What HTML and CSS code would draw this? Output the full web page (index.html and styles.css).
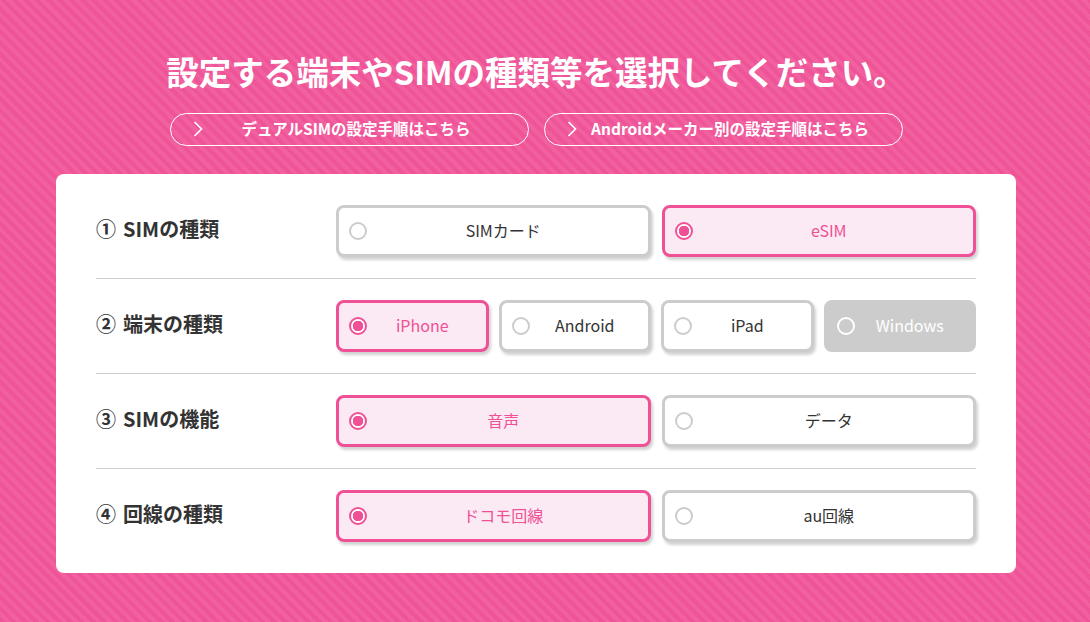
FILE: index.html
```html
<!DOCTYPE html>
<html lang="ja">
<head>
<meta charset="utf-8">
<title>設定する端末やSIMの種類等を選択してください。</title>
<link rel="stylesheet" href="styles.css">
</head>
<body>
<div class="wrap">
  <h1 class="title">設定する端末やSIMの種類等を選択してください。</h1>
  <div class="links">
    <a class="pill" href="#">
      <svg class="chev" viewBox="0 0 12 18" width="12" height="18"><polyline points="2.5,2 9.5,9 2.5,16" fill="none" stroke="#fff" stroke-width="1.7"/></svg>
      <span>デュアルSIMの設定手順はこちら</span>
    </a>
    <a class="pill" href="#">
      <svg class="chev" viewBox="0 0 12 18" width="12" height="18"><polyline points="2.5,2 9.5,9 2.5,16" fill="none" stroke="#fff" stroke-width="1.7"/></svg>
      <span>Androidメーカー別の設定手順はこちら</span>
    </a>
  </div>
  <div class="card">
    <div class="row">
      <div class="label"><span class="num">①</span>SIMの種類</div>
      <div class="opts cols2">
        <div class="opt"><span class="radio"></span><span class="txt">SIMカード</span></div>
        <div class="opt sel"><span class="radio"></span><span class="txt">eSIM</span></div>
      </div>
    </div>
    <div class="row">
      <div class="label"><span class="num">②</span>端末の種類</div>
      <div class="opts cols4">
        <div class="opt sel"><span class="radio"></span><span class="txt">iPhone</span></div>
        <div class="opt"><span class="radio"></span><span class="txt">Android</span></div>
        <div class="opt"><span class="radio"></span><span class="txt">iPad</span></div>
        <div class="opt dis"><span class="radio"></span><span class="txt">Windows</span></div>
      </div>
    </div>
    <div class="row">
      <div class="label"><span class="num">③</span>SIMの機能</div>
      <div class="opts cols2">
        <div class="opt sel"><span class="radio"></span><span class="txt">音声</span></div>
        <div class="opt"><span class="radio"></span><span class="txt">データ</span></div>
      </div>
    </div>
    <div class="row">
      <div class="label"><span class="num">④</span>回線の種類</div>
      <div class="opts cols2">
        <div class="opt sel"><span class="radio"></span><span class="txt">ドコモ回線</span></div>
        <div class="opt"><span class="radio"></span><span class="txt">au回線</span></div>
      </div>
    </div>
  </div>
</div>
</body>
</html>
```
FILE: styles.css
```css
html, body {
  margin: 0;
  padding: 0;
}
body {
  padding-right: 18px;
  min-height: 622px;
  font-family: "Noto Sans CJK JP", "Noto Sans", sans-serif;
  color: #333;
  background-color: #f0559a;
  background-image: repeating-linear-gradient(45deg, #ef5398 0px, #ef5398 4px, #f2619f 4px, #f2619f 8px);
}
.wrap {
  width: 960px;
  margin: 0 auto;
  padding-top: 49px;
}
.title {
  margin: 0;
  text-align: center;
  color: #fff;
  font-size: 32.5px;
  line-height: 44px;
  font-weight: 700;
  letter-spacing: 0;
}
.links {
  margin-top: 20px;
  display: flex;
  justify-content: center;
  gap: 15px;
}
.pill {
  position: relative;
  box-sizing: border-box;
  width: 359px;
  height: 33px;
  border: 1px solid #fff;
  border-radius: 17px;
  display: flex;
  align-items: center;
  justify-content: center;
  padding: 0 20px 4px 34px;
  color: #fff;
  text-decoration: none;
  font-size: 15.5px;
  font-weight: 700;
}
.chev {
  position: absolute;
  left: 21px;
  top: 6px;
}
.card {
  margin-top: 28px;
  background: #fff;
  border-radius: 8px;
  padding: 10px 40px;
}
.row {
  display: flex;
  align-items: center;
  padding: 21px 0;
  border-bottom: 1px solid #cfcfcf;
}
.row:last-child {
  border-bottom: none;
}
.label {
  width: 240px;
  font-size: 20px;
  line-height: 26px;
  font-weight: 700;
  color: #333;
  padding-bottom: 4px;
}
.num {
  margin-right: 7px;
}
.opts {
  flex: 1;
  display: grid;
  gap: 11px;
}
.cols2 { grid-template-columns: 1fr 1fr; }
.cols4 { grid-template-columns: repeat(4, 1fr); gap: 10px; }
.opt {
  position: relative;
  box-sizing: border-box;
  height: 52px;
  border: 3px solid #cccccc;
  border-radius: 8px;
  background: #fff;
  box-shadow: 2px 3px 3px rgba(0, 0, 0, 0.18);
  display: flex;
  align-items: center;
  justify-content: center;
  padding: 0 20px 2px 40px;
  font-size: 16px;
  color: #333;
}
.radio {
  position: absolute;
  left: 10px;
  top: 50%;
  margin-top: -9px;
  box-sizing: border-box;
  width: 18px;
  height: 18px;
  border-radius: 50%;
  border: 2px solid #cccccc;
  background: #fff;
}
.opt.sel {
  border-color: #ef5096;
  background: #fbeaf3;
  color: #ef5096;
}
.opt.sel .radio {
  border-color: #ef5096;
  background: radial-gradient(circle, #ef5096 0 5px, #fff 5.5px);
}
.opt.dis {
  border-color: #cccccc;
  background: #cccccc;
  box-shadow: none;
  color: #fff;
}
.opt.dis .radio {
  border-color: #fff;
  background: transparent;
}
```
